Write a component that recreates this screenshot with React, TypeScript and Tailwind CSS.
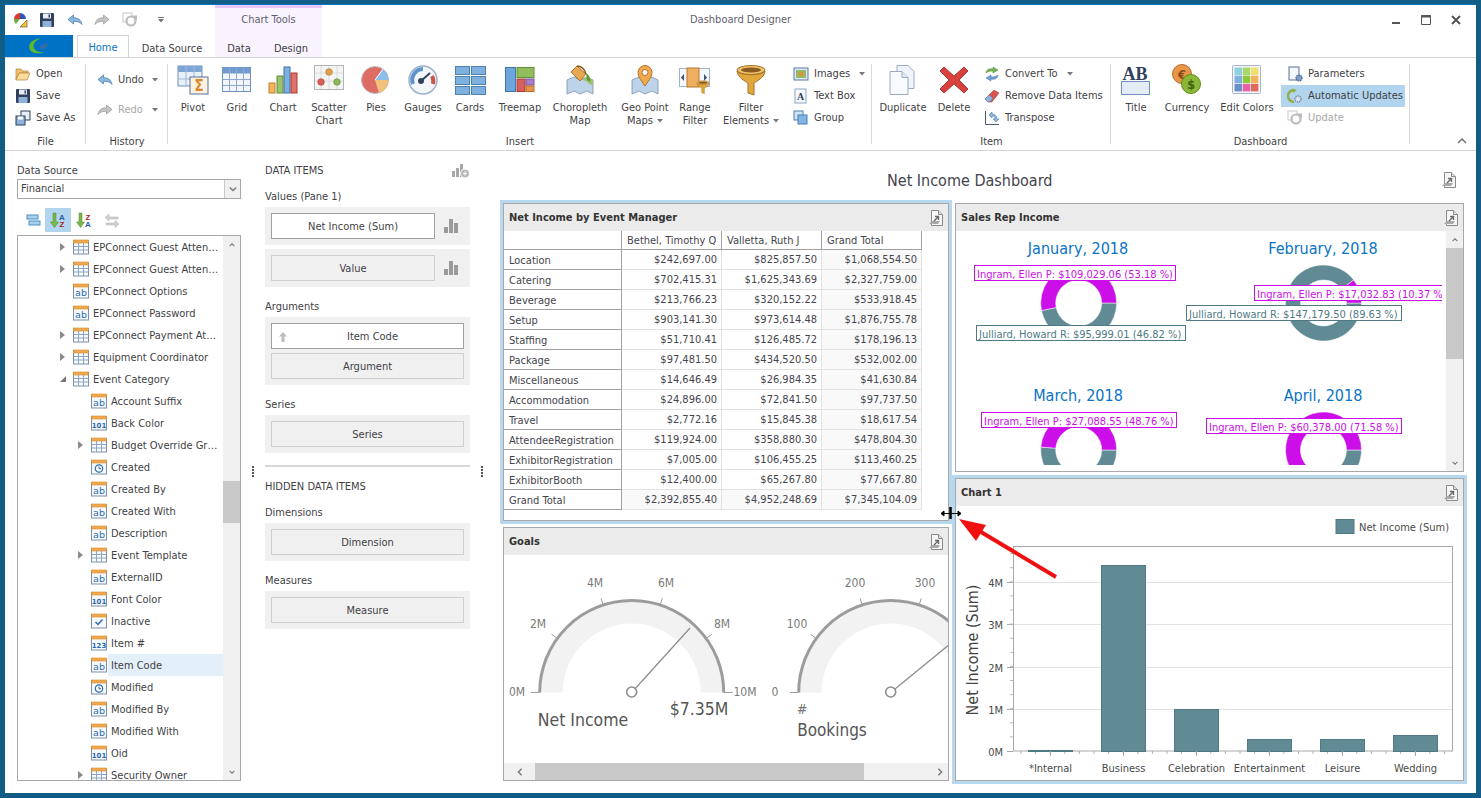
import type { ReactNode } from 'react';

type Kids = { children: ReactNode };

const Ic16 = ({ children }: Kids) => (
  <svg viewBox="0 0 16 16" className="h-4 w-4 shrink-0">
    {children}
  </svg>
);
const Ic32 = ({ children }: Kids) => (
  <svg viewBox="0 0 32 32" className="h-8 w-8 shrink-0">
    {children}
  </svg>
);

const Caret = () => (
  <svg viewBox="0 0 6 4" className="h-[4px] w-[6px] shrink-0">
    <path d="M0 0h6L3 3.5z" fill="#777" />
  </svg>
);

/* small ribbon icons */
const UndoIcon = ({ gray }: { gray?: boolean }) => (
  <Ic16>
    <path
      d="M1 7.5 6.5 3v2.8c4.5 0 7.5 1.7 8.5 6.7-2-2.6-4.5-3.2-8.5-3.2V12z"
      fill={gray ? '#c4c4c4' : '#8db8e0'}
      stroke={gray ? '#a0a0a0' : '#4f7fae'}
      strokeWidth=".8"
    />
  </Ic16>
);
const RedoIcon = () => (
  <Ic16>
    <path
      d="M15 7.5 9.5 3v2.8C5 5.800 2 7.500 1 12.500c2-2.600 4.500-3.200 8.500-3.200V12z"
      fill="#c4c4c4"
      stroke="#a0a0a0"
      strokeWidth=".8"
    />
  </Ic16>
);
const FloppyIcon = () => (
  <Ic16>
    <rect x="1" y="1" width="14" height="14" rx="1" fill="#2f3f5c" />
    <rect x="4" y="1.500" width="8" height="5" fill="#e8eef6" />
    <rect x="3.500" y="9" width="9" height="6" fill="#8fb2d8" />
    <rect x="9.500" y="2.500" width="1.500" height="3" fill="#2f3f5c" />
  </Ic16>
);
const SaveAsIcon = () => (
  <Ic16>
    <rect x="6" y="1" width="9" height="9" fill="#e8eef6" stroke="#2f3f5c" />
    <rect x="1" y="6" width="9" height="9" fill="#8fb2d8" stroke="#2f3f5c" />
    <rect x="3" y="6.500" width="5" height="3" fill="#fff" />
  </Ic16>
);
const FolderIcon = () => (
  <Ic16>
    <path d="M1 3h5l1 2h6v2H4L1 14z" fill="#f3c26f" stroke="#b0823a" strokeWidth=".7" />
    <path d="M4 7h11l-3 7H1z" fill="#fbdc9a" stroke="#b0823a" strokeWidth=".7" />
  </Ic16>
);
const RefreshIcon = ({ color = '#bdbdbd' }: { color?: string }) => (
  <Ic16>
    <rect x="1" y="1" width="9" height="9" fill="none" stroke="#c8c8c8" />
    <circle cx="9" cy="9" r="4.500" fill="#fff" stroke={color} strokeWidth="2.200" />
    <path d="M10 3.500h5v5z" fill={color} />
  </Ic16>
);
const ImagesIcon = () => (
  <Ic16>
    <rect x="1" y="2" width="14" height="12" fill="#dfe9f5" stroke="#5b78a8" />
    <rect x="3" y="4" width="10" height="8" fill="#8fbb6a" />
    <circle cx="8" cy="8" r="2.500" fill="#e0953a" />
  </Ic16>
);
const TextBoxIcon = () => (
  <Ic16>
    <rect x="2" y="1" width="11" height="14" fill="#f6f9fc" stroke="#8aa3c6" />
    <text x="7.500" y="12" textAnchor="middle" fontSize="10" fontWeight="700" fontFamily="Liberation Serif" fill="#2f3f5c">
      A
    </text>
  </Ic16>
);
const GroupIcon = () => (
  <Ic16>
    <rect x="1" y="1" width="9" height="9" fill="#cfe3f5" stroke="#4f7fae" />
    <rect x="5" y="5" width="9" height="9" fill="#7fb6e6" stroke="#4f7fae" />
  </Ic16>
);
const ConvertIcon = () => (
  <Ic16>
    <path d="M2 7c0-3 3-5 7-4V1l5 3-5 3V5C6 5 4 5.500 2 7z" fill="#77b255" stroke="#4d8a37" strokeWidth=".5" />
    <path d="M14 9c0 3-3 5-7 4v2l-5-3 5-3v2c3 0 5-.500 7-2z" fill="#6f9fd6" stroke="#4373aa" strokeWidth=".5" />
  </Ic16>
);
const EraserIcon = () => (
  <Ic16>
    <path d="M1 11 10 2l5 3-7 9H4z" fill="#d9534f" stroke="#a83a36" strokeWidth=".5" />
    <path d="M1 11l4-4 4 3-3 4H4z" fill="#8fb2e0" stroke="#5b78a8" strokeWidth=".5" />
  </Ic16>
);
const TransposeIcon = () => (
  <Ic16>
    <path d="M1.500 1v13.500H15" fill="none" stroke="#4a5a78" />
    <path d="M5 5 8 2v2c3 0 5 2 5 5h2l-3 3-3-3h2c0-2-1-3-3-3v2z" fill="#8db8e0" stroke="#4f7fae" strokeWidth=".6" />
  </Ic16>
);
const ParamsIcon = () => (
  <Ic16>
    <rect x="2" y="1" width="10" height="13" fill="#f4f7fb" stroke="#5b6f94" />
    <circle cx="12" cy="12" r="3" fill="#7f9cc6" stroke="#465f8c" strokeWidth="1.200" strokeDasharray="1.400 .8" />
  </Ic16>
);
const AutoIcon = () => (
  <Ic16>
    <path d="M7 2a6 6 0 1 0 0 12" fill="none" stroke="#8fb04a" strokeWidth="2.500" />
    <path d="M5 .500 10 2 6 5z" fill="#8fb04a" />
    <circle cx="11" cy="11" r="3" fill="#d8e2ee" stroke="#6d7f9c" strokeWidth="1.300" strokeDasharray="1.400 .8" />
  </Ic16>
);

/* large ribbon icons */
const PivotIcon = () => (
  <Ic32>
    <rect x="1" y="2" width="24" height="20" fill="#e8f0f9" stroke="#6f8fbc" />
    <rect x="1" y="2" width="24" height="6" fill="#7da6d6" />
    <path d="M9 2v20M17 2v20M1 15h24" stroke="#9fb6d6" />
    <rect x="13" y="13" width="18" height="17" fill="#fbf3df" stroke="#5b6f94" />
    <text x="22" y="27" textAnchor="middle" fontSize="15" fontWeight="700" fill="#d9862c">
      Σ
    </text>
  </Ic32>
);
const GridIcon = () => (
  <Ic32>
    <rect x="1.500" y="3.500" width="28" height="24" fill="#f2f6fb" stroke="#6f8fbc" />
    <rect x="1.500" y="3.500" width="28" height="6" fill="#6f9bd0" />
    <path d="M8.500 4v23M15.500 4v23M22.500 4v23M2 15.500h27M2 21.500h27" stroke="#8fa9cc" />
  </Ic32>
);
const ChartIcon = () => (
  <Ic32>
    <rect x="2" y="19" width="6" height="10" fill="#f0b45a" stroke="#c27f27" />
    <rect x="10" y="12" width="6" height="17" fill="#9cc46a" stroke="#5f8f3a" />
    <rect x="17" y="3" width="6" height="26" fill="#7db0e0" stroke="#3f74aa" />
    <rect x="24" y="9" width="6" height="20" fill="#e0726a" stroke="#a83a36" />
  </Ic32>
);
const ScatterIcon = () => (
  <Ic32>
    <rect x="1.500" y="1.500" width="29" height="24" fill="#f4f4f4" stroke="#b5b5b5" />
    <path d="M8 2v23M16 2v23M24 2v23M2 9h28M2 17h28" stroke="#dcdcdc" />
    <circle cx="16" cy="8" r="3.300" fill="#e0a050" stroke="#aa7428" strokeWidth=".6" />
    <circle cx="8" cy="18" r="3.300" fill="#d9605a" stroke="#a83a36" strokeWidth=".6" />
    <circle cx="24" cy="18" r="3.300" fill="#8cb85a" stroke="#5f8f3a" strokeWidth=".6" />
  </Ic32>
);
const PiesIcon = () => (
  <Ic32>
    <circle cx="15" cy="16" r="13.500" fill="#dc6c64" stroke="#b8bcc4" />
    <path d="M15 16 23 5A13.500 13.500 0 0 1 28.500 16z" fill="#8dbde8" />
    <path d="M15 16H28.500A13.500 13.500 0 0 1 19 28.900z" fill="#f2c07a" />
    <path d="M15 16 23 5" stroke="#fff" />
  </Ic32>
);
const GaugeIcon = () => (
  <Ic32>
    <circle cx="16" cy="16" r="14" fill="#f3f6fa" stroke="#9fb2cc" strokeWidth="1.500" />
    <path d="M6 20a11 11 0 0 1 10-15" fill="none" stroke="#5d94cc" strokeWidth="4" />
    <path d="M25 12a11 11 0 0 1 1 8" fill="none" stroke="#c9554c" strokeWidth="4" />
    <path d="M14 17 23 9" stroke="#33415c" strokeWidth="2" />
    <circle cx="14" cy="17" r="3" fill="#33415c" />
  </Ic32>
);
const CardsIcon = () => (
  <Ic32>
    {[2, 12, 22].map((y) =>
      [1, 17].map((x) => (
        <rect key={`${x}-${y}`} x={x + 0.5} y={y + 0.5} width="14" height="8" fill="#7eb0e0" stroke="#4f7fae" />
      ))
    )}
  </Ic32>
);
const TreemapIcon = () => (
  <Ic32>
    <rect x="1.500" y="3.500" width="10" height="24" fill="#6ea6dc" stroke="#3f74aa" />
    <rect x="13" y="3.500" width="17" height="10" fill="#92bd5c" stroke="#5f8f3a" />
    <rect x="13" y="15" width="8" height="12.500" fill="#d9605a" stroke="#a83a36" />
    <rect x="22" y="15" width="8" height="6" fill="#a77fcc" stroke="#7a55a0" />
    <rect x="22" y="22" width="8" height="5.500" fill="#e8974a" stroke="#b56c24" />
  </Ic32>
);
const MapBase = () => (
  <path
    d="M3 16 10 13l6 3 7-3 6 3v14l-6-3-7 3-6-3-7 3z"
    fill="#bcd3ea"
    stroke="#7f8fa8"
    strokeWidth=".8"
  />
);
const ChoroIcon = () => (
  <Ic32>
    <MapBase />
    <path d="M18 15 24 13l5 3v6z" fill="#9cc46a" />
    <path d="M7 8 13 2l9 8-6 7z" fill="#e8a850" stroke="#a8702a" />
    <path d="M13 2c4 0 8 3 9 8" fill="none" stroke="#8a5a20" strokeWidth="1.400" />
    <path d="M22 9c3 2 5 5 4 9l-3-2z" fill="#5f9a3a" />
  </Ic32>
);
const GeoIcon = () => (
  <Ic32>
    <MapBase />
    <path d="M16 22C11 15 9 12 9 8.500a7 7 0 0 1 14 0C23 12 21 15 16 22z" fill="#f0a94f" stroke="#b0732a" />
    <circle cx="16" cy="8.500" r="3" fill="#fff" stroke="#b0732a" />
  </Ic32>
);
const FunnelShape = ({ small }: { small?: boolean }) => (
  <g transform={small ? 'translate(17 16) scale(.44)' : undefined}>
    <ellipse cx="16" cy="6" rx="14" ry="4.500" fill="#f0c468" stroke="#a8702a" />
    <path d="M2 7c1 7 8 10 11 12v10l6 2V19c3-2 10-5 11-12-3 5-25 5-28 0z" fill="#e0a83c" stroke="#a8702a" />
    <ellipse cx="16" cy="6" rx="10" ry="2.500" fill="#8a5a20" />
  </g>
);
const RangeIcon = () => (
  <Ic32>
    <rect x=".5" y="4.500" width="30" height="18" fill="#f4f7fb" stroke="#9fb2cc" />
    <rect x="8" y="4" width="12" height="19" fill="#eeb060" stroke="#b5782e" />
    <path d="M5 10v7l-3-3.500zM25 10v7l3-3.500z" fill="#3f4f6c" />
    <FunnelShape small />
  </Ic32>
);
const FilterIcon = () => (
  <Ic32>
    <FunnelShape />
  </Ic32>
);
const DuplicateIcon = () => (
  <Ic32>
    <path d="M10 1.500h11l6 6v17H10z" fill="#f0f4fa" stroke="#9aa9c4" />
    <path d="M3 7.500h12l6 6v17H3z" fill="#f8fafd" stroke="#9aa9c4" />
    <path d="M15 7.500v6h6" fill="#dfe7f3" stroke="#9aa9c4" />
  </Ic32>
);
const DeleteIcon = () => (
  <Ic32>
    <path
      d="M6 3 16 12 26 3l4 4-9 9 9 9-4 4-10-9-10 9-4-4 9-9-9-9z"
      fill="#d9423c"
      stroke="#a83a36"
    />
  </Ic32>
);
const TitleIcon = () => (
  <Ic32>
    <text x="15" y="16" textAnchor="middle" fontSize="18" fontWeight="700" fontFamily="Liberation Serif" fill="#2f3f5c">
      AB
    </text>
    <rect x="1.500" y="17.500" width="28" height="13" fill="#e4ecf6" stroke="#6f8fbc" />
  </Ic32>
);
const CurrencyIcon = () => (
  <Ic32>
    <circle cx="11" cy="10" r="9.500" fill="#e8974a" stroke="#b56c24" />
    <text x="11" y="15" textAnchor="middle" fontSize="13" fontWeight="700" fill="#8a4a14">
      €
    </text>
    <circle cx="20" cy="20" r="9.500" fill="#8cb83a" stroke="#5f8f1a" />
    <text x="20" y="25" textAnchor="middle" fontSize="13" fontWeight="700" fill="#3f6410">
      $
    </text>
  </Ic32>
);
const ColorsIcon = () => {
  const colors = ['#8fd0e0', '#a8d86a', '#f0e070', '#7db0e0', '#8cc83a', '#f0b45a', '#6a8fc8', '#e860a8', '#e06a5a'];
  return (
    <Ic32>
      <rect x="1.500" y="1.500" width="28" height="28" rx="1" fill="#f4f6fa" stroke="#a8b4c8" />
      {colors.map((c, i) => (
        <rect key={c} x={3.5 + (i % 3) * 8.2} y={3.5 + Math.floor(i / 3) * 8.2} width="7.500" height="7.500" fill={c} />
      ))}
    </Ic32>
  );
};

const Large = ({ w, icon, label, caret }: { w: string; icon: ReactNode; label: string[]; caret?: boolean }) => (
  <div className={`flex shrink-0 flex-col items-center ${w}`}>
    {icon}
    <div className="mt-[5px] text-center leading-[13px]">
      {label.map((l, i) => (
        <div key={l} className="flex items-center justify-center gap-1 whitespace-nowrap">
          {l}
          {caret && i === label.length - 1 && <Caret />}
        </div>
      ))}
    </div>
  </div>
);

const Small = ({ icon, label, caret, farCaret, muted, active, className = '' }: {
  icon: ReactNode;
  label: string;
  caret?: boolean;
  farCaret?: boolean;
  muted?: boolean;
  active?: boolean;
  className?: string;
}) => (
  <div className={`flex h-[22px] items-center gap-[5px] whitespace-nowrap ${active ? 'bg-[#b1d5ee]' : ''} ${muted ? 'text-[#a8a8a8]' : ''} ${className}`}>
    {icon}
    {label}
    {caret && <span className="ml-1"><Caret /></span>}
    {farCaret && <span className="ml-auto"><Caret /></span>}
  </div>
);

const Group = ({ label, w, children }: { label: string; w: string; children: ReactNode }) => (
  <div className={`relative flex h-full shrink-0 flex-col ${w}`}>
    <div className="flex h-[77px] pt-[6px]">{children}</div>
    <div className="text-center leading-[14px]">{label}</div>
    <div className="absolute right-0 top-[6px] h-[80px] w-px bg-[#d8d8d8]" />
  </div>
);

const Ribbon = () => (
  <div className="flex h-[94px] shrink-0 border-y border-[#d4d4d4] text-[#3f3f46]">
    <Group label="File" w="w-[81px]">
      <div className="-mt-px ml-[10px]">
        <Small icon={<FolderIcon />} label="Open" />
        <Small icon={<FloppyIcon />} label="Save" />
        <Small icon={<SaveAsIcon />} label="Save As" />
      </div>
    </Group>
    <Group label="History" w="w-[82px]">
      <div className="ml-[11px] mt-[5px] flex w-[61px] flex-col gap-2">
        <Small icon={<UndoIcon />} label="Undo" farCaret />
        <Small icon={<RedoIcon />} label="Redo" farCaret muted />
      </div>
    </Group>
    <Group label="Insert" w="w-[704px]">
      <Large w="w-[50px]" icon={<PivotIcon />} label={['Pivot']} />
      <Large w="w-[38px]" icon={<GridIcon />} label={['Grid']} />
      <Large w="w-[54px]" icon={<ChartIcon />} label={['Chart']} />
      <Large w="w-[38px]" icon={<ScatterIcon />} label={['Scatter', 'Chart']} />
      <Large w="w-[56px]" icon={<PiesIcon />} label={['Pies']} />
      <Large w="w-[38px]" icon={<GaugeIcon />} label={['Gauges']} />
      <Large w="w-[56px]" icon={<CardsIcon />} label={['Cards']} />
      <Large w="w-[44px]" icon={<TreemapIcon />} label={['Treemap']} />
      <Large w="w-[76px]" icon={<ChoroIcon />} label={['Choropleth', 'Map']} />
      <Large w="w-[54px]" icon={<GeoIcon />} label={['Geo Point', 'Maps']} caret />
      <Large w="w-[46px]" icon={<RangeIcon />} label={['Range', 'Filter']} />
      <Large w="w-[66px]" icon={<FilterIcon />} label={['Filter', 'Elements']} caret />
      <div className="-mt-px ml-[9px]">
        <Small icon={<ImagesIcon />} label="Images" caret />
        <Small icon={<TextBoxIcon />} label="Text Box" />
        <Small icon={<GroupIcon />} label="Group" />
      </div>
    </Group>
    <Group label="Item" w="w-[239px]">
      <Large w="w-[62px]" icon={<DuplicateIcon />} label={['Duplicate']} />
      <Large w="w-[40px]" icon={<DeleteIcon />} label={['Delete']} />
      <div className="-mt-px ml-[10px]">
        <Small icon={<ConvertIcon />} label="Convert To" caret />
        <Small icon={<EraserIcon />} label="Remove Data Items" />
        <Small icon={<TransposeIcon />} label="Transpose" />
      </div>
    </Group>
    <Group label="Dashboard" w="w-[299px]">
      <Large w="w-[50px]" icon={<TitleIcon />} label={['Title']} />
      <Large w="w-[52px]" icon={<CurrencyIcon />} label={['Currency']} />
      <Large w="w-[68px]" icon={<ColorsIcon />} label={['Edit Colors']} />
      <div className="-mt-px w-[124px]">
        <Small icon={<ParamsIcon />} label="Parameters" className="pl-[6px]" />
        <Small icon={<AutoIcon />} label="Automatic Updates" active className="pl-[6px]" />
        <Small icon={<RefreshIcon />} label="Update" muted className="pl-[6px]" />
      </div>
    </Group>
    <div className="flex flex-1 items-end justify-end pb-[6px] pr-[9px]">
      <svg viewBox="0 0 10 6" className="h-[6px] w-[10px]">
        <path d="M1 5l4-4 4 4" fill="none" stroke="#777" strokeWidth="1.600" />
      </svg>
    </div>
  </div>
);

const Header = () => (
  <div className="flex h-[52px] shrink-0 text-[#3f3f46]">
    <div className="flex w-[210px] shrink-0 flex-col">
      <div className="flex h-[30px] items-center pl-[7px]">
        <svg viewBox="0 0 16 16" className="h-4 w-4 shrink-0">
          <path d="M8 1a6 6 0 0 1 6 6H8z" fill="#2f55b8" />
          <path d="M8 1a6 6 0 0 0-6 6h6z" fill="#d83a30" />
          <path d="M2 7h6l-4 5a6 6 0 0 1-2-5z" fill="#6ab04a" />
          <path d="M8 15l7-7v7z" fill="#f0c040" stroke="#7a5a1a" strokeWidth=".7" />
        </svg>
        <span className="ml-[11px]"><FloppyIcon /></span>
        <span className="ml-[12px]"><UndoIcon /></span>
        <span className="ml-[11px]"><RedoIcon /></span>
        <span className="ml-[12px]"><RefreshIcon /></span>
        <span className="ml-[20px] flex flex-col items-center gap-px">
          <span className="h-px w-[6px] bg-[#777]" />
          <Caret />
        </span>
      </div>
      <div className="flex h-[22px] items-end">
        <div className="flex h-[22px] w-[68px] items-center justify-center bg-[#0072c6]">
          <svg viewBox="0 0 24 16" className="h-[18px] w-[26px]">
            <path d="M14 1C6 1 2 6 3 10c1 4 7 6 14 4-6 0-10-2-10-6 0-3 3-6 7-7z" fill="#5cb82e" />
            <path d="M13 7l8-2-2 5-6 1z" fill="#2f6fa8" />
          </svg>
        </div>
        <div className="ml-[4px] flex h-[22px] w-[52px] items-center justify-center border-x border-t border-[#d4d4d4] bg-white pt-[3px] text-[#0a74c4]">
          Home
        </div>
        <div className="w-[86px] text-center leading-[16px]">Data Source</div>
      </div>
    </div>
    <div className="flex w-[107px] shrink-0 flex-col border-t-[3px] border-[#e6c8fb] bg-[#f9f3fd]">
      <div className="flex h-[24px] items-center justify-center text-[#5f6070]">Chart Tools</div>
      <div className="flex h-[25px] items-end leading-[16px]">
        <span className="w-[48px] text-center">Data</span>
        <span className="w-[56px] text-center">Design</span>
      </div>
    </div>
    <div className="flex flex-1 items-start">
      <div className="flex h-[30px] items-center pl-[368px] text-[#5f6070]">Dashboard Designer</div>
      <div className="ml-auto flex h-[30px] items-center gap-[20px] pr-[15px]">
        <svg viewBox="0 0 10 10" className="h-[10px] w-[10px]"><path d="M1 8h8" stroke="#555" strokeWidth="2" /></svg>
        <svg viewBox="0 0 10 10" className="h-[10px] w-[10px]"><path d="M.5.5h9v9h-9z" fill="none" stroke="#555" /><path d="M0 1.500h10" stroke="#555" strokeWidth="2" /></svg>
        <svg viewBox="0 0 10 10" className="h-[10px] w-[10px]"><path d="M1 1l8 8M9 1l-8 8" stroke="#555" strokeWidth="2" /></svg>
      </div>
    </div>
  </div>
);

type Kind = 'table' | 'ab' | '101' | '123' | 'check' | 'clock';

const FieldIcon = ({ kind }: { kind: Kind }) => (
  <Ic16>
    <rect x=".5" y="1.500" width="15" height="13.500" fill="#f7fafd" stroke="#7d8fa8" />
    <rect x=".5" y="1" width="15" height="3" fill="#f0a94f" stroke="#d98a2b" strokeWidth=".6" />
    {kind === 'table' && (
      <path d="M5.500 4v11M10.500 4v11M1 7.500h14M1 11h14" stroke="#8fa5c4" />
    )}
    {(kind === 'ab' || kind === '101' || kind === '123') && (
      <text
        x="8"
        y="13"
        textAnchor="middle"
        fontSize={kind === 'ab' ? 9.5 : 7}
        fontWeight={kind === 'ab' ? 400 : 700}
        fontFamily="DejaVu Sans"
        fill="#2a6cb0"
      >
        {kind}
      </text>
    )}
    {kind === 'check' && <path d="M4.500 9l2.500 2.500 4.500-5" fill="none" stroke="#2a6cb0" strokeWidth="1.500" />}
    {kind === 'clock' && (
      <>
        <circle cx="8" cy="9.500" r="3.700" fill="none" stroke="#2a6cb0" strokeWidth="1.200" />
        <path d="M8 7.500v2.200h2" fill="none" stroke="#2a6cb0" />
      </>
    )}
  </Ic16>
);

const tree: { t: string; k: Kind; l: 1 | 2; open?: boolean; sel?: boolean }[] = [
  { t: 'EPConnect Guest Atten…', k: 'table', l: 1 },
  { t: 'EPConnect Guest Atten…', k: 'table', l: 1 },
  { t: 'EPConnect Options', k: 'ab', l: 1 },
  { t: 'EPConnect Password', k: 'ab', l: 1 },
  { t: 'EPConnect Payment At…', k: 'table', l: 1 },
  { t: 'Equipment Coordinator', k: 'table', l: 1 },
  { t: 'Event Category', k: 'table', l: 1, open: true },
  { t: 'Account Suffix', k: 'ab', l: 2 },
  { t: 'Back Color', k: '101', l: 2 },
  { t: 'Budget Override Gr…', k: 'table', l: 2 },
  { t: 'Created', k: 'clock', l: 2 },
  { t: 'Created By', k: 'ab', l: 2 },
  { t: 'Created With', k: 'ab', l: 2 },
  { t: 'Description', k: 'ab', l: 2 },
  { t: 'Event Template', k: 'table', l: 2 },
  { t: 'ExternalID', k: 'ab', l: 2 },
  { t: 'Font Color', k: '101', l: 2 },
  { t: 'Inactive', k: 'check', l: 2 },
  { t: 'Item #', k: '123', l: 2 },
  { t: 'Item Code', k: 'ab', l: 2, sel: true },
  { t: 'Modified', k: 'clock', l: 2 },
  { t: 'Modified By', k: 'ab', l: 2 },
  { t: 'Modified With', k: 'ab', l: 2 },
  { t: 'Oid', k: '101', l: 2 },
  { t: 'Security Owner', k: 'table', l: 2 },
];

const Chev = ({ d, cls = 'h-[6px] w-[10px]' }: { d: string; cls?: string }) => (
  <svg viewBox="0 0 10 10" className={cls}>
    <path d={d} fill="none" stroke="#7a7a7a" strokeWidth="1.800" />
  </svg>
);

const SortIcon = ({ top, bottom, active }: { top: string; bottom: string; active?: boolean }) => (
  <div className={`flex h-[24px] w-[26px] items-center justify-center ${active ? 'bg-[#b1d5ee]' : ''}`}>
    <svg viewBox="0 0 16 16" className="h-4 w-4">
      <path d="M3 1h3v9h2.500L4.500 15.500.5 10H3z" fill="#7ab648" stroke="#4d8a2c" strokeWidth=".5" />
      <text x="12" y="7.500" textAnchor="middle" fontSize="8" fontWeight="700" fontFamily="Liberation Sans" fill={top === 'A' ? '#2a5fa8' : '#b02020'}>{top}</text>
      <text x="12" y="15" textAnchor="middle" fontSize="8" fontWeight="700" fontFamily="Liberation Sans" fill={bottom === 'A' ? '#2a5fa8' : '#b02020'}>{bottom}</text>
    </svg>
  </div>
);

const LeftPanel = () => (
  <div className="flex h-full w-[240px] shrink-0 flex-col pl-[12px] pr-[4px] text-[#3f3f46]">
    <div className="mt-[13px] leading-[14px]">Data Source</div>
    <div className="mt-px flex h-[20px] items-center justify-between border border-[#a8a8a8] pl-[3px]">
      <span className="pt-px">Financial</span>
      <div className="flex h-full w-[16px] items-center justify-center border-l border-[#c8c8c8] bg-[#f0f0f0]">
        <Chev d="M1 3l4 4 4-4" cls="h-[8px] w-[8px]" />
      </div>
    </div>
    <div className="mt-[9px] flex h-[24px] items-center pl-[6px]">
      <div className="flex w-[22px] justify-center">
        <svg viewBox="0 0 16 16" className="h-4 w-4">
          <rect x="1" y="3" width="11" height="4" fill="#a8d0f0" stroke="#4f8fc0" />
          <rect x="3" y="9" width="11" height="4" fill="#a8d0f0" stroke="#4f8fc0" />
        </svg>
      </div>
      <SortIcon top="A" bottom="Z" active />
      <SortIcon top="Z" bottom="A" />
      <div className="ml-[5px] flex w-[20px] justify-center">
        <svg viewBox="0 0 16 16" className="h-4 w-4">
          <path d="M14 5H5V2L1 5.500 5 9V7h9zM2 11h9V8.500l4 3.500-4 3.500V13H2z" fill="#cfcfcf" stroke="#b0b0b0" strokeWidth=".5" />
        </svg>
      </div>
    </div>
    <div className="mt-[3px] flex h-[546px] overflow-hidden border border-[#a8a8a8]">
      <div className="flex-1 overflow-hidden">
        {tree.map((r, i) => (
          <div key={`${r.t}-${i}`} className={`flex h-[22px] items-center whitespace-nowrap ${r.l === 1 ? 'pl-[42px]' : 'pl-[60px]'}`}>
            <span className="flex w-[13px] shrink-0 items-center">
              {r.k === 'table' &&
                (r.open ? (
                  <svg viewBox="0 0 6 6" className="h-[6px] w-[6px]"><path d="M6 0v6H0z" fill="#777" /></svg>
                ) : (
                  <svg viewBox="0 0 5 8" className="h-[8px] w-[5px]"><path d="M0 0l5 4-5 4z" fill="#8a8a8a" /></svg>
                ))}
            </span>
            <FieldIcon kind={r.k} />
            <span className={`ml-px flex h-[22px] flex-1 items-center pl-[3px] pt-[2px] ${r.sel ? 'bg-[#e3f0fa]' : ''}`}>{r.t}</span>
          </div>
        ))}
      </div>
      <div className="flex w-[17px] shrink-0 flex-col items-center bg-[#f0f0f0]">
        <div className="flex h-[17px] items-center"><Chev d="M1 7l4-4 4 4" /></div>
        <div className="mt-[228px] h-[42px] w-full bg-[#c8c8c8]" />
        <div className="mt-auto flex h-[17px] items-center"><Chev d="M1 3l4 4 4-4" /></div>
      </div>
    </div>
  </div>
);

const BarsGlyph = () => (
  <svg viewBox="0 0 14 14" className="h-[14px] w-[14px] shrink-0">
    <path d="M0 8h4v6H0zM5 0h4v14H5zM10 4h4v10h-4z" fill="#9a9a9a" />
  </svg>
);

const Slot = ({ label, filled, arrow, row }: { label: string; filled?: boolean; arrow?: boolean; row?: boolean }) => (
  <div className={`relative flex h-[26px] shrink-0 items-center justify-center border pt-[2px] ${row ? 'flex-1' : 'w-full'} ${arrow ? 'pl-[10px]' : ''} ${filled ? 'border-[#a0a0a0] bg-white' : 'border-[#cfcfcf] bg-[#f0f0f0]'}`}>
    {arrow && (
      <svg viewBox="0 0 8 10" className="absolute left-[7px] h-[10px] w-[8px]">
        <path d="M4 0l4 4.500H5.500V10h-3V4.500H0z" fill="#bdbdbd" />
      </svg>
    )}
    {label}
  </div>
);

const MidPanel = () => (
  <div className="flex h-full w-[205px] shrink-0 flex-col text-[#3f3f46]">
    <div className="mt-[13px] flex h-[14px] items-center justify-between leading-[14px]">
      DATA ITEMS
      <svg viewBox="0 0 18 14" className="h-[14px] w-[18px]">
        <path d="M0 7h3v6H0zM4 4h3v9H4zM8 0h3v13H8z" fill="#a8a8a8" />
        <circle cx="13" cy="9.500" r="4.500" fill="#b8b8b8" stroke="#fff" />
        <path d="M11 9.500h4M13 7.500v4" stroke="#fff" />
      </svg>
    </div>
    <div className="mt-[12px] leading-[14px]">Values (Pane 1)</div>
    <div className="mt-[3px] flex h-[38px] items-center gap-[9px] bg-[#f0f0f0] pl-[6px] pr-[12px]">
      <Slot label="Net Income (Sum)" filled row />
      <BarsGlyph />
    </div>
    <div className="mt-[4px] flex h-[38px] items-center gap-[9px] bg-[#f0f0f0] pl-[6px] pr-[12px]">
      <Slot label="Value" row />
      <BarsGlyph />
    </div>
    <div className="mt-[13px] leading-[14px]">Arguments</div>
    <div className="mt-[3px] flex h-[68px] flex-col justify-center gap-[4px] bg-[#f0f0f0] px-[6px]">
      <Slot label="Item Code" filled arrow />
      <Slot label="Argument" />
    </div>
    <div className="mt-[13px] leading-[14px]">Series</div>
    <div className="mt-[3px] flex h-[38px] items-center bg-[#f0f0f0] px-[6px]">
      <Slot label="Series" />
    </div>
    <div className="mt-[12px] h-[2px] bg-[#d8d8d8]" />
    <div className="mt-[13px] leading-[14px]">HIDDEN DATA ITEMS</div>
    <div className="mt-[12px] leading-[14px]">Dimensions</div>
    <div className="mt-[3px] flex h-[38px] items-center bg-[#f0f0f0] px-[6px]">
      <Slot label="Dimension" />
    </div>
    <div className="mt-[13px] leading-[14px]">Measures</div>
    <div className="mt-[3px] flex h-[38px] items-center bg-[#f0f0f0] px-[6px]">
      <Slot label="Measure" />
    </div>
  </div>
);

const Splitter = ({ className }: { className: string }) => (
  <div className={`flex h-full shrink-0 flex-col items-center justify-center gap-[1px] pb-[2px] ${className}`}>
    {[0, 1, 2, 3].map((i) => (
      <span key={i} className="h-[2px] w-[2px] bg-[#555]" />
    ))}
  </div>
);

const ExportIcon = () => (
  <svg viewBox="0 0 14 16" className="h-4 w-[14px] shrink-0">
    <path d="M2.500 .5h7l4 4v11h-11z" fill="#f6f6f6" stroke="#8a8a8a" />
    <path d="M9.500 .5v4h4" fill="#ddd" stroke="#8a8a8a" />
    <path d="M0 14h9l2-3H3z" fill="#a8a8a8" />
    <path d="M5 11l4-4M6 6.500h3.500V10" fill="none" stroke="#6a6a6a" strokeWidth="1.400" />
  </svg>
);

const Panel = ({ title, focus, className, children }: { title: string; focus?: boolean; className: string; children: ReactNode }) => (
  <div className={`shrink-0 border-[3px] ${focus ? 'border-[#b8d8f0]' : 'border-transparent'} ${className}`}>
    <div className="flex h-full flex-col overflow-hidden border border-[#a8a8a8] bg-white">
      <div className="flex h-[27px] shrink-0 items-center justify-between bg-[#ebebeb] pl-[5px] pr-[5px] font-bold text-[#333]">
        <span className="pt-[2px]">{title}</span>
        <ExportIcon />
      </div>
      {children}
    </div>
  </div>
);

const rows = [
  ['Location', '$242,697.00', '$825,857.50', '$1,068,554.50'],
  ['Catering', '$702,415.31', '$1,625,343.69', '$2,327,759.00'],
  ['Beverage', '$213,766.23', '$320,152.22', '$533,918.45'],
  ['Setup', '$903,141.30', '$973,614.48', '$1,876,755.78'],
  ['Staffing', '$51,710.41', '$126,485.72', '$178,196.13'],
  ['Package', '$97,481.50', '$434,520.50', '$532,002.00'],
  ['Miscellaneous', '$14,646.49', '$26,984.35', '$41,630.84'],
  ['Accommodation', '$24,896.00', '$72,841.50', '$97,737.50'],
  ['Travel', '$2,772.16', '$15,845.38', '$18,617.54'],
  ['AttendeeRegistration', '$119,924.00', '$358,880.30', '$478,804.30'],
  ['ExhibitorRegistration', '$7,005.00', '$106,455.25', '$113,460.25'],
  ['ExhibitorBooth', '$12,400.00', '$65,267.80', '$77,667.80'],
  ['Grand Total', '$2,392,855.40', '$4,952,248.69', '$7,345,104.09'],
];

const PivotTable = () => (
  <div className="grid w-[418px] grid-cols-[118px_100px_100px_100px] text-[#44444c]">
    <div className="h-[19px] border-b border-r border-[#a0a0a0]" />
    {['Bethel, Timothy Q', 'Valletta, Ruth J', 'Grand Total'].map((h) => (
      <div key={h} className="flex h-[19px] items-center border-b border-r border-[#a0a0a0] pl-[5px] pt-[2px]">
        {h}
      </div>
    ))}
    {rows.map((r, ri) =>
      r.map((c, ci) => (
        <div
          key={`${ri}-${ci}`}
          className={
            ci === 0
              ? 'flex h-[20px] items-center border-b border-r border-[#a0a0a0] pl-[5px] pt-[3px]'
              : `flex h-[20px] items-center justify-end border-b border-r border-[#e2e2e2] pr-[4px] pt-[2px] ${ci === 3 || ri === 12 ? 'bg-[#f9f9f9]' : ''}`
          }
        >
          {c}
        </div>
      ))
    )}
  </div>
);

const GaugeSvg = () => {
  const g = (cx: number, cy: number, key: string, labels: [string, number, number][], tip: [number, number]) => {
    const R = 92;
    const r = 69;
    return (
      <g key={key}>
        <path
          d={`M${cx - R} ${cy}A${R} ${R} 0 0 1 ${cx + R} ${cy}H${cx + r}A${r} ${r} 0 0 0 ${cx - r} ${cy}z`}
          fill="#f2f2f2"
        />
        <path d={`M${cx - R} ${cy}A${R} ${R} 0 0 1 ${cx + R} ${cy}`} fill="none" stroke="#9c9c9c" strokeWidth="3" />
        {[36, 72, 108, 144].map((a) => {
          const c = Math.cos((a * Math.PI) / 180);
          const s = Math.sin((a * Math.PI) / 180);
          return (
            <path key={a} d={`M${cx - R * c} ${cy - R * s}L${cx - (R + 7) * c} ${cy - (R + 7) * s}`} stroke="#9c9c9c" />
          );
        })}
        <path d={`M${cx - R - 9} ${cy}h9M${cx + R} ${cy}h9`} stroke="#9c9c9c" />
        <path d={`M${cx} ${cy}L${tip[0]} ${tip[1]}`} stroke="#8c8c8c" strokeWidth="1.200" />
        <circle cx={cx} cy={cy - 0.5} r="5" fill="#fff" stroke="#8c8c8c" strokeWidth="1.600" />
        {labels.map(([t, x, y]) => (
          <text key={t} x={x} y={y} textAnchor="middle" dominantBaseline="central" fontSize="12" fill="#7a7a7a">
            {t}
          </text>
        ))}
      </g>
    );
  };
  return (
    <svg viewBox="504 555 444 208" className="h-[208px] w-[444px] shrink-0">
      {g(631.7, 692.5, 'a', [['0M', 517, 692], ['2M', 538, 624], ['4M', 595, 583], ['6M', 666, 583], ['8M', 722, 624], ['10M', 745, 692]], [690, 628])}
      {g(890.7, 692.5, 'b', [['0', 775, 692], ['100', 797, 624], ['200', 855, 583], ['300', 925, 583]], [950, 644])}
      <text x="699" y="709" textAnchor="middle" dominantBaseline="central" fontSize="17.500" fill="#555">$7.35M</text>
      <text x="583" y="720" textAnchor="middle" dominantBaseline="central" fontSize="17.500" fill="#555">Net Income</text>
      <text x="802" y="709" textAnchor="middle" dominantBaseline="central" fontSize="14" fill="#777">#</text>
      <text x="832" y="730" textAnchor="middle" dominantBaseline="central" fontSize="17" fill="#555">Bookings</text>
    </svg>
  );
};

const MAGENTA = '#cc0ee8';
const TEAL = '#608a94';

const donutSlice = (cx: number, cy: number, from: number, to: number) => {
  const R = 38;
  const r = 23;
  const p = (rad: number, deg: number) =>
    `${(cx + rad * Math.cos((deg * Math.PI) / 180)).toFixed(2)} ${(cy - rad * Math.sin((deg * Math.PI) / 180)).toFixed(2)}`;
  const large = to - from > 180 ? 1 : 0;
  return `M${p(R, from)}A${R} ${R} 0 ${large} 0 ${p(R, to)}L${p(r, to)}A${r} ${r} 0 ${large} 1 ${p(r, from)}z`;
};

const Donut = ({ cx, cy, pct }: { cx: number; cy: number; pct: number }) => {
  const a = pct * 3.6;
  return (
    <>
      <path d={donutSlice(cx, cy, a, 360)} fill={TEAL} stroke="#fff" strokeWidth=".5" />
      <path d={donutSlice(cx, cy, 0, a)} fill={MAGENTA} stroke="#fff" strokeWidth=".5" />
    </>
  );
};

const PieLabel = ({ x, y, w, t, c }: { x: number; y: number; w: number; t: string; c: string }) => (
  <>
    <rect x={x + 0.5} y={y + 0.5} width={w} height="15" fill="#fff" stroke={c} />
    <text x={x + 3} y={y + 9.5} dominantBaseline="central" fontSize="11" fill={c}>
      {t}
    </text>
  </>
);

const SalesSvg = () => (
  <svg viewBox="956 232 486 234" className="h-[234px] w-[486px] shrink-0">
    {[
      ['January, 2018', 1078, 249],
      ['February, 2018', 1323, 249],
      ['March, 2018', 1078, 396],
      ['April, 2018', 1323, 396],
    ].map(([t, x, y]) => (
      <text key={t} x={x} y={y} textAnchor="middle" dominantBaseline="central" fontSize="16" fill="#0a74c4">
        {t}
      </text>
    ))}
    <Donut cx={1078.7} cy={304} pct={53.18} />
    <Donut cx={1323.5} cy={304} pct={10.37} />
    <Donut cx={1078.7} cy={451} pct={48.76} />
    <Donut cx={1323.5} cy={451} pct={71.58} />
    <PieLabel x={974} y={266} w={201} t="Ingram, Ellen P: $109,029.06 (53.18 %)" c={MAGENTA} />
    <PieLabel x={976} y={326} w={209} t="Julliard, Howard R: $95,999.01 (46.82 %)" c="#4f7a84" />
    <PieLabel x={1254} y={286} w={200} t="Ingram, Ellen P: $17,032.83 (10.37 %)" c={MAGENTA} />
    <PieLabel x={1186} y={306} w={215} t="Julliard, Howard R: $147,179.50 (89.63 %)" c="#4f7a84" />
    <PieLabel x={981} y={413} w={195} t="Ingram, Ellen P: $27,088.55 (48.76 %)" c={MAGENTA} />
    <PieLabel x={1206} y={419} w={195} t="Ingram, Ellen P: $60,378.00 (71.58 %)" c={MAGENTA} />
  </svg>
);

const bars: [string, number, number][] = [
  ['*Internal', 1028, 750],
  ['Business', 1101, 565],
  ['Celebration', 1174, 709],
  ['Entertainment', 1247, 739],
  ['Leisure', 1320, 739],
  ['Wedding', 1393, 735],
];

const ChartSvg = () => (
  <svg viewBox="956 506 507 274" className="h-[274px] w-[507px] shrink-0">
    <rect x="1336" y="519.500" width="18" height="14" fill={TEAL} stroke="#4f7a84" />
    <text x="1359" y="527" dominantBaseline="central" fontSize="11" fill="#4a4a4a">Net Income (Sum)</text>
    <rect x="1013.500" y="546.500" width="439" height="204.500" fill="#fff" stroke="#a8a8a8" />
    {[[0, 751], [1, 709], [2, 667], [3, 624], [4, 582]].map(([v, y]) => (
      <g key={v}>
        {v > 0 && <path d={`M1014 ${y + 0.5}H1452`} stroke="#e2e2e2" />}
        <path d={`M1007 ${y + 0.5}h6`} stroke="#a8a8a8" />
        <text x="1003" y={y + 1} textAnchor="end" dominantBaseline="central" fontSize="11" fill="#4a4a4a">{v}M</text>
      </g>
    ))}
    {Array.from({ length: 14 }, (_, i) => 751 - (i + 1) * 14.1).map((y) => (
      <path key={y} d={`M1010 ${y.toFixed(1)}h3`} stroke="#b8b8b8" />
    ))}
    {Array.from({ length: 30 }, (_, i) => 1021 + i * 14.6).map((x) => (
      <path key={x} d={`M${x.toFixed(1)} 751v3`} stroke="#b0b0b0" />
    ))}
    {bars.map(([l, x, y]) => (
      <g key={l}>
        <rect x={x + 0.5} y={y + 0.5} width="44" height={751 - y} fill={TEAL} stroke="#4f7a84" />
        <path d={`M${x + 22.5} 751v5`} stroke="#a8a8a8" />
        <text x={x + 22.5} y="768" textAnchor="middle" dominantBaseline="central" fontSize="11" fill="#4a4a4a">{l}</text>
      </g>
    ))}
    <text transform="translate(972 650) rotate(-90)" textAnchor="middle" dominantBaseline="central" fontSize="16" fill="#444">
      Net Income (Sum)
    </text>
  </svg>
);

const Dashboard = () => (
  <div className="flex h-full flex-1 flex-col pl-[6px] pr-[9px] text-[#3f3f46]">
    <div className="flex h-[49px] shrink-0 items-start pt-[21px]">
      <span className="ml-[387px] text-[16px] leading-[18px] text-[#44444c]">Net Income Dashboard</span>
      <span className="ml-auto mr-[11px]"><ExportIcon /></span>
    </div>
    <div className="flex">
      <div className="flex w-[452px] shrink-0 flex-col">
        <Panel title="Net Income by Event Manager" focus className="h-[324px]">
          <PivotTable />
        </Panel>
        <Panel title="Goals" className="h-[260px]">
          <div className="flex-1 overflow-hidden"><GaugeSvg /></div>
          <div className="flex h-[17px] shrink-0 items-center bg-[#f0f0f0]">
            <div className="flex w-[31px] justify-center"><Chev d="M7 1L3 5l4 4" cls="h-[10px] w-[8px]" /></div>
            <div className="h-full w-[329px] bg-[#c8c8c8]" />
            <div className="ml-auto flex w-[17px] justify-center"><Chev d="M3 1l4 4-4 4" cls="h-[10px] w-[8px]" /></div>
          </div>
        </Panel>
      </div>
      <div className="flex w-[515px] shrink-0 flex-col">
        <Panel title="Sales Rep Income" className="h-[275px]">
          <div className="flex flex-1 justify-between overflow-hidden">
            <SalesSvg />
            <div className="flex w-[17px] shrink-0 flex-col items-center bg-[#f0f0f0]">
              <div className="flex h-[17px] items-center"><Chev d="M1 7l4-4 4 4" /></div>
              <div className="h-[111px] w-full bg-[#c8c8c8]" />
              <div className="mt-auto flex h-[17px] items-center"><Chev d="M1 3l4 4 4-4" /></div>
            </div>
          </div>
        </Panel>
        <Panel title="Chart 1" focus className="h-[309px]">
          <ChartSvg />
        </Panel>
      </div>
    </div>
  </div>
);

export default function App() {
  return (
    <div className="relative h-[798px] w-[1481px] overflow-hidden border-b-[5px] border-l-[5px] border-r-[5px] border-t-[4px] border-[#125d85] text-[11px] [font-family:'DejaVu_Sans_Condensed','DejaVu_Sans',sans-serif]">
      <div className="flex h-full flex-col border-t border-[#0a74c4] bg-white">
        <Header />
        <Ribbon />
        <div className="flex min-h-0 flex-1">
          <LeftPanel />
          <Splitter className="w-[16px]" />
          <div className="w-[4px] shrink-0" />
          <MidPanel />
          <Splitter className="w-[24px]" />
          <Dashboard />
        </div>
      </div>
      {/* annotation arrow and resize cursor over the dashboard */}
      <svg viewBox="5 4 1471 789" className="pointer-events-none absolute left-0 top-0 h-[789px] w-[1471px]">
        <path d="M1056 577 981 532" stroke="#f01010" strokeWidth="4" />
        <path d="M959 519 986 525 976 541z" fill="#f01010" />
        <path d="M950.500 507v12" stroke="#000" strokeWidth="2.500" />
        <path d="M941 513.500h20M944 511l-3 2.500 3 2.500zM958 511l3 2.500-3 2.500z" stroke="#000" />
      </svg>
    </div>
  );
}
